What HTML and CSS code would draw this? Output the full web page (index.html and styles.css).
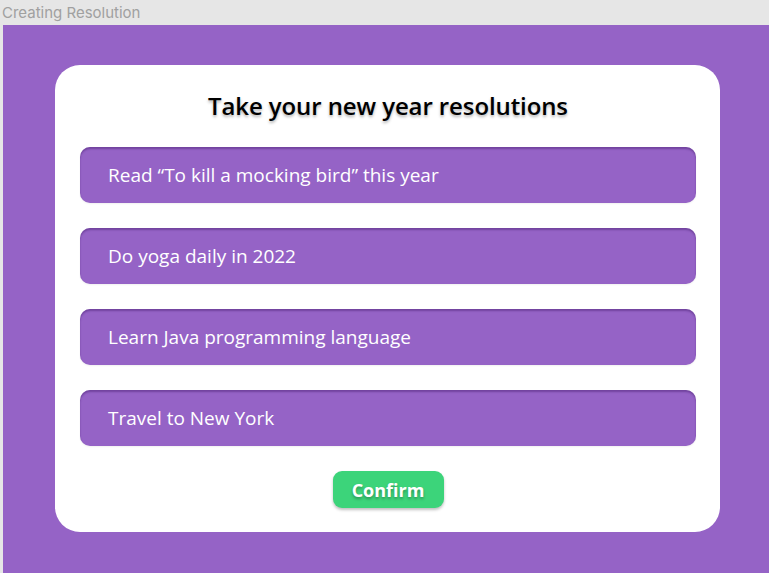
FILE: index.html
```html
<!DOCTYPE html>
<html>
<head>
<meta charset="utf-8">
<link rel="stylesheet" href="styles.css">
</head>
<body>
<div class="titlebar">Creating Resolution</div>
<div class="stage">
  <div class="card">
    <h1 class="title">Take your new year resolutions</h1>
    <div class="list">
      <div class="item">Read “To kill a mocking bird” this year</div>
      <div class="item">Do yoga daily in 2022</div>
      <div class="item">Learn Java programming language</div>
      <div class="item">Travel to New York</div>
    </div>
    <div class="actions">
      <button class="confirm">Confirm</button>
    </div>
  </div>
</div>
</body>
</html>
```
FILE: styles.css
```css
html, body {
  margin: 0;
  padding: 0;
  height: 100%;
}
body {
  background: #e6e6e6;
  font-family: "Open Sans", "Noto Sans", sans-serif;
  display: flex;
  flex-direction: column;
  overflow: hidden;
}
.titlebar {
  height: 25px;
  line-height: 26px;
  padding-left: 2px;
  font-family: "Inter", "Liberation Sans", sans-serif;
  font-size: 15px;
  color: #a0a0a0;
  flex: none;
}
.stage {
  flex: 1;
  margin-left: 3px;
  background: #9563c6;
  padding: 40px 49px 41px 52px;
  display: flex;
}
.card {
  flex: 1;
  background: #ffffff;
  border-radius: 25px;
  padding: 24px 24px 24px 25px;
  display: flex;
  flex-direction: column;
}
.title {
  margin: 0 0 24px;
  text-align: center;
  font-size: 24px;
  line-height: 34px;
  font-weight: 600;
  color: #000;
  text-shadow: 0 2px 3px rgba(0,0,0,0.3);
  letter-spacing: -0.1px;
}
.list {
  display: flex;
  flex-direction: column;
  gap: 25px;
}
.item {
  height: 56px;
  box-sizing: border-box;
  background: #9563c6;
  border-radius: 10px;
  box-shadow: inset 0 2px 2px rgba(60,20,100,0.4), 0 1px 2px rgba(0,0,0,0.06);
  color: #fff;
  font-size: 19px;
  font-weight: 500;
  display: flex;
  align-items: center;
  padding-left: 28px;
}
.actions {
  display: flex;
  justify-content: center;
  margin-top: 25px;
}
.confirm {
  width: 111px;
  height: 37px;
  border: none;
  border-radius: 9px;
  background: #3cd47a;
  color: #fff;
  font-family: "Open Sans", "Noto Sans", sans-serif;
  font-size: 18px;
  font-weight: 700;
  text-shadow: 0 2px 3px rgba(0,0,0,0.3);
  box-shadow: 0 2px 3px rgba(0,0,0,0.25);
  padding: 0;
}
```
